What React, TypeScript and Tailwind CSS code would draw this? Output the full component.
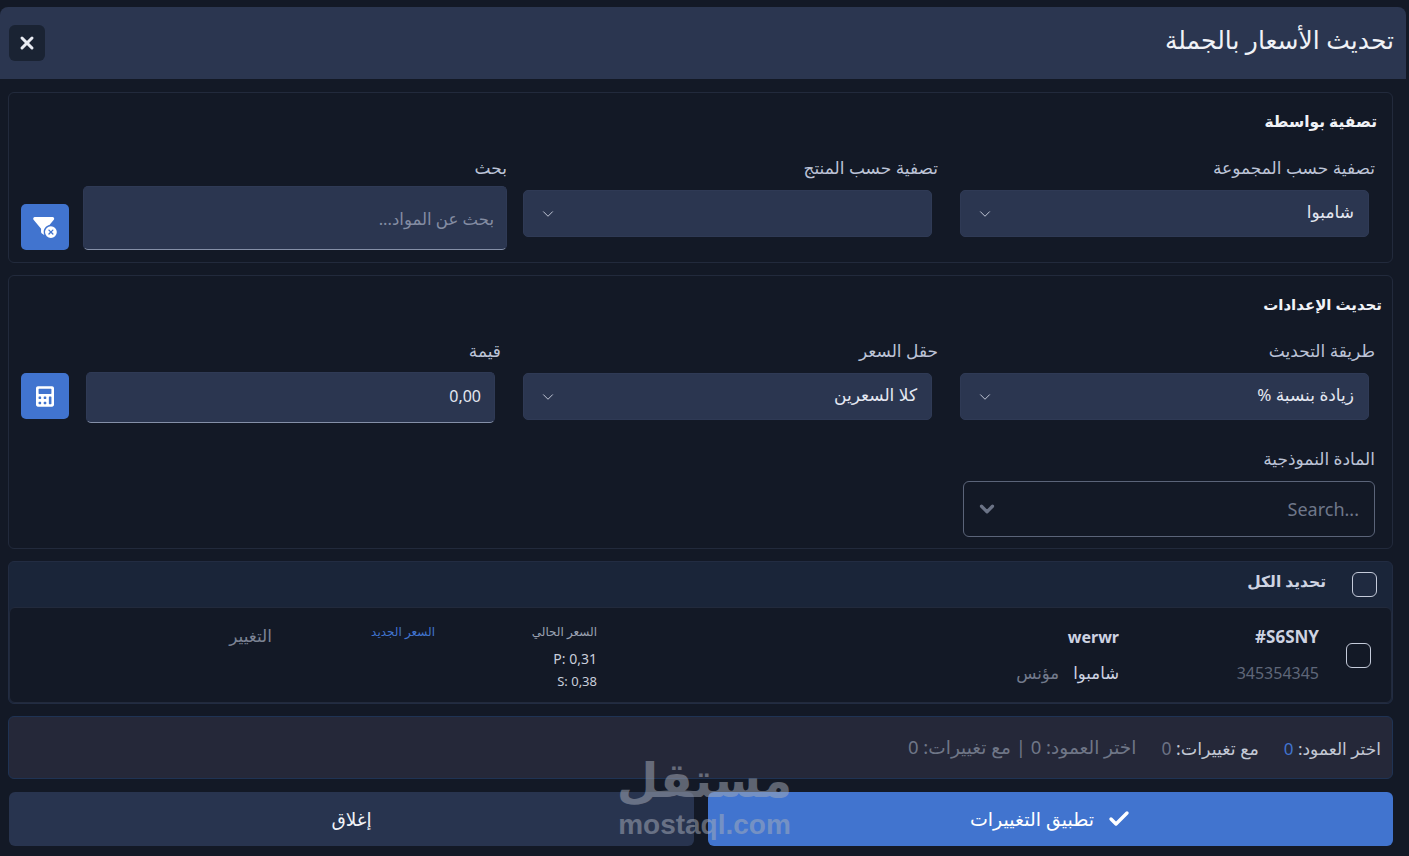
import { Check, ChevronDown, X } from "lucide-react";
import { FaCalculator } from "react-icons/fa";
import { FaFilterCircleXmark } from "react-icons/fa6";

const labelClass = "block h-5 text-[17px] leading-5 text-[#bcc3d6]";
const fieldClass =
  "flex items-center justify-between rounded-[5px] bg-[#2b3650] border border-[#2f3a55] text-[#e3e7f1]";

function SelectBox({ value }: { value?: string }) {
  return (
    <div className={`${fieldClass} mr-[6px] h-[47px] w-[409px] pr-[14px] pl-[15px] text-[17px]`}>
      <span className="pb-[3px]">{value}</span>
      <ChevronDown className="h-[18px] w-[18px] text-[#c3c9d8]" strokeWidth={1.3} />
    </div>
  );
}

function Field({ label, value }: { label: string; value?: string }) {
  return (
    <div className="w-[415px] shrink-0">
      <label className={labelClass}>{label}</label>
      <div className="mt-3">
        <SelectBox value={value} />
      </div>
    </div>
  );
}

function IconButton({ children, className }: { children: React.ReactNode; className?: string }) {
  return (
    <button className={`flex w-12 shrink-0 items-center justify-center rounded-[5px] bg-[#4174cf] text-white ${className}`}>
      {children}
    </button>
  );
}

export default function App() {
  return (
    <div
      dir="rtl"
      className="relative h-[856px] w-[1409px] overflow-hidden bg-[#131926] pt-[7px] font-['Noto_Sans','DejaVu_Sans',sans-serif]"
    >
      <div className="mr-[3px] w-[1406px]">
        <header className="flex h-[72px] items-center justify-between rounded-t-[8px] bg-[#2b3650] pr-[12px] pl-[9px]">
          <h1 className="pb-[7px] text-[25px] font-normal text-[#f0f2f7]">تحديث الأسعار بالجملة</h1>
          <button className="flex h-9 w-9 items-center justify-center rounded-[6px] bg-[#1a2333] text-[#e8ebf2]">
            <X className="h-[20px] w-[20px]" strokeWidth={3.6} />
          </button>
        </header>

        <div className="pt-[13px] pr-[13px] pl-[8px]">
          <section className="h-[171px] rounded-[6px] border border-[#222a3c] pt-[18px] pr-[14px] pl-[12px]">
            <h2 className="h-5 pr-[1px] text-[15.5px] leading-5 font-bold text-[#f0f2f7]">تصفية بواسطة</h2>
            <div className="mt-[27px] flex items-start pr-[3px]">
              <Field label="تصفية حسب المجموعة" value="شامبوا" />
              <div className="mr-[22px]">
                <Field label="تصفية حسب المنتج" />
              </div>
              <div className="mr-[16px] w-[424px] shrink-0">
                <label className={labelClass}>بحث</label>
                <input
                  placeholder="بحث عن المواد..."
                  className="mt-2 h-16 w-full rounded-[5px] border border-[#2f3a55] border-b-[#8590a8] bg-[#2b3650] px-3 text-[16.5px] placeholder:text-[#848da3]"
                />
              </div>
              <IconButton className="mt-[46px] mr-[14px] h-[46px]">
                <FaFilterCircleXmark className="h-[21px] w-[24px]" />
              </IconButton>
            </div>
          </section>

          <section className="mt-[12px] h-[274px] rounded-[6px] border border-[#222a3c] pt-[18px] pr-[10px] pl-[12px]">
            <h2 className="h-5 text-[15px] leading-5 font-bold text-[#f0f2f7]">تحديث الإعدادات</h2>
            <div className="mt-[27px] flex items-start pr-[7px]">
              <Field label="طريقة التحديث" value="زيادة بنسبة %" />
              <div className="mr-[22px]">
                <Field label="حقل السعر" value="كلا السعرين" />
              </div>
              <div className="mr-[22px] w-[415px] shrink-0">
                <label className={labelClass}>قيمة</label>
                <input
                  readOnly
                  value="0,00"
                  className="mt-[11px] mr-[6px] h-[51px] w-[409px] rounded-[5px] border border-[#2f3a55] border-b-[#8590a8] bg-[#2b3650] px-[13px] pb-[3px] text-[16px] text-[#e3e7f1]"
                />
              </div>
              <IconButton className="mt-[32px] mr-[17px] h-[46px]">
                <FaCalculator className="h-[21px] w-[18px]" />
              </IconButton>
            </div>
            <div className="mt-[26px] pr-[7px]">
              <label className={labelClass}>المادة النموذجية</label>
              <div className="mt-3 flex h-[56px] w-[412px] items-center justify-between rounded-[6px] border-[1.5px] border-[#5b6479] pr-[15px] pl-[12px]">
                <span dir="ltr" className="text-[18px] text-[#6f778a]">Search...</span>
                <ChevronDown className="h-[22px] w-[22px] text-[#6b7386]" strokeWidth={3.5} />
              </div>
            </div>
          </section>

          <section className="mt-[12px] h-[143px] rounded-[6px] border border-[#222c42] bg-[#1a2539]">
            <div className="flex h-[45px] items-center pr-[15px]">
              <span className="h-[25px] w-[25px] rounded-[6px] border border-[#c5cbda] bg-[#1f2a40]" />
              <span className="mr-[26px] pb-[5px] text-[15.5px] font-bold text-[#ced3e2]">تحديد الكل</span>
            </div>
            <div className="flex h-[96px] rounded-[6px] border border-[#222a3c] bg-[#131926]">
              <span className="mt-[35px] mr-[20px] h-[25px] w-[25px] shrink-0 rounded-[6px] border border-[#c5cbda]" />
              <div className="mr-[27px] w-[200px] shrink-0 pt-[15px]">
                <div dir="ltr" className="h-7 text-right text-[17px] leading-7 font-bold text-[#ced3e2]">#S6SNY</div>
                <div className="mt-[10px] text-[16px] text-[#5f6779]">345354345</div>
              </div>
              <div className="w-[522px] shrink-0 pt-[15px]">
                <div className="h-7 text-[16px] leading-7 font-bold text-[#ced3e2]">werwr</div>
                <div className="mt-[10px] flex gap-[14px] text-[16.5px]">
                  <span className="text-[#ced3e2]">شامبوا</span>
                  <span className="text-[#737b8d]">مؤنس</span>
                </div>
              </div>
              <div className="w-[162px] shrink-0 pt-[15px]">
                <div className="text-[12px] leading-[18px] text-[#9aa1b1]">السعر الحالي</div>
                <div className="mt-[8px] text-[14px] leading-5 text-[#c9cedb]">P: 0,31</div>
                <div className="mt-[2px] text-[13px] leading-5 text-[#c9cedb]">S: 0,38</div>
              </div>
              <div className="w-[163px] shrink-0 pt-[15px] text-[12px] leading-[18px] text-[#4174cf]">السعر الجديد</div>
              <div className="pt-[16px] text-[17px] leading-6 text-[#7c8394]">التغيير</div>
            </div>
          </section>

          <section className="mt-[12px] flex h-[63px] items-center rounded-[6px] border border-[#1f3354] bg-[#252839] pt-[2px] pr-[11px] text-[17px] text-[#c3c8d5]">
            <span>
              اختر العمود: <span className="text-[#4174cf]">0</span>
            </span>
            <span className="mr-[25px] text-[17.5px]">
              مع تغييرات: <span className="text-[#6b7284]">0</span>
            </span>
            <span className="mr-[25px] pb-[3px] text-[18.5px] text-[#6f7687]">اختر العمود: 0 | مع تغييرات: 0</span>
          </section>

          <div className="mt-[13px] flex gap-[14px]">
            <button className="flex h-[54px] w-[685px] items-center justify-center gap-[13px] rounded-[6px] bg-[#4174cf] text-[19px] text-white">
              <Check className="h-[24px] w-[24px]" strokeWidth={3.4} />
              تطبيق التغييرات
            </button>
            <button className="flex h-[54px] w-[685px] items-center justify-center rounded-[6px] bg-[#28344f] text-[18.5px] text-[#f0f2f7]">
              إغلاق
            </button>
          </div>
        </div>
      </div>

      <div className="absolute top-[752px] left-[619px] flex w-[171px] flex-col items-center text-[#a8aebb] opacity-50">
        <span className="font-['DejaVu_Sans',sans-serif] text-[48px] leading-[57px] font-bold">مستقل</span>
        <span dir="ltr" className="font-['Liberation_Sans',sans-serif] text-[28px] leading-[32px] font-bold">mostaql.com</span>
      </div>
    </div>
  );
}
